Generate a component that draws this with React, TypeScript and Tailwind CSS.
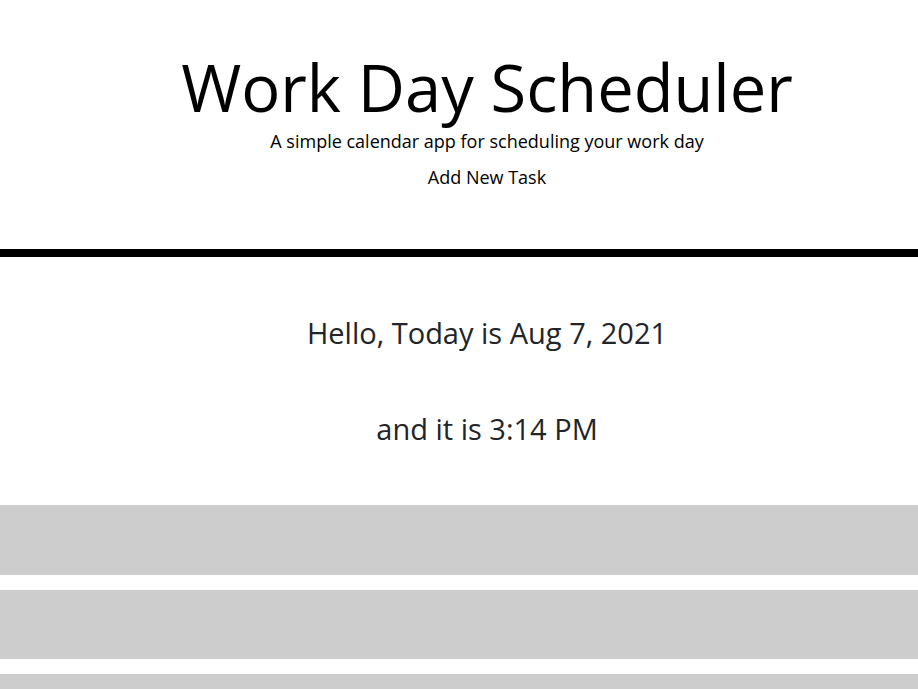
import React from 'react'

const rows = [1, 2, 3]

const App = () => {
  return (
    <div className="min-h-screen bg-white text-black" style={{ fontFamily: '"Open Sans", sans-serif' }}>
      <header className="pl-[56px] pt-[51px] pb-[60px] text-center">
        <h1 className="text-[65px] leading-[72px] font-normal">Work Day Scheduler</h1>
        <p className="mt-[6px] text-[18px] leading-[24px]">A simple calendar app for scheduling your work day</p>
        <p className="mt-[12px] text-[18px] leading-[24px]">Add New Task</p>
      </header>

      <div className="h-[8px] bg-black" />

      <section className="pl-[56px] pt-[58px] pb-[58px] text-center text-[#212529]">
        <p className="text-[29px] leading-[36px]">Hello, Today is Aug 7, 2021</p>
        <p className="mt-[60px] text-[29px] leading-[36px]">and it is 3:14 PM</p>
      </section>

      <div className="flex flex-col gap-[15px]">
        {rows.map((row) => (
          <div key={row} className="h-[69.5px] bg-[#cdcdcd]" />
        ))}
      </div>
    </div>
  )
}

export default App
